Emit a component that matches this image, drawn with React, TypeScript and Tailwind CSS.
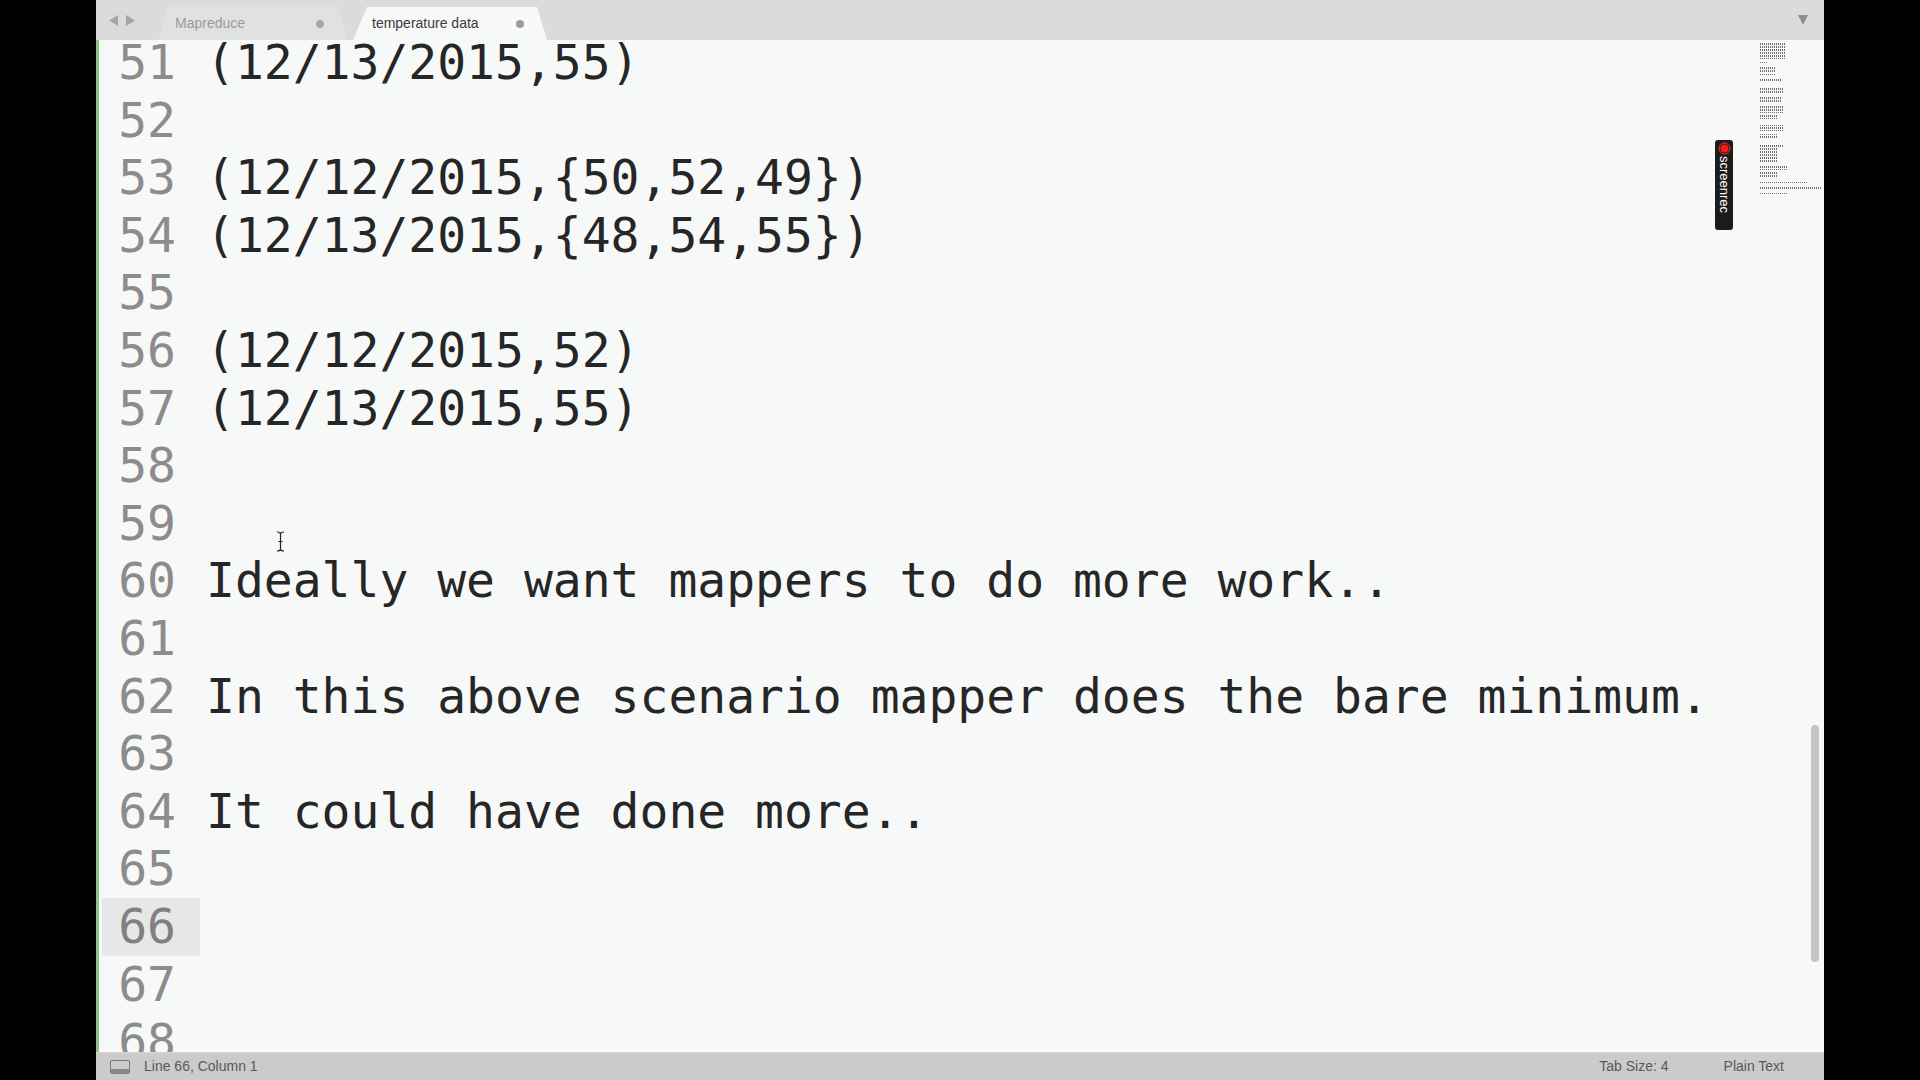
import React from 'react';

const lines: [number, string][] = [
  [51, '(12/13/2015,55)'],
  [52, ''],
  [53, '(12/12/2015,{50,52,49})'],
  [54, '(12/13/2015,{48,54,55})'],
  [55, ''],
  [56, '(12/12/2015,52)'],
  [57, '(12/13/2015,55)'],
  [58, ''],
  [59, ''],
  [60, 'Ideally we want mappers to do more work..'],
  [61, ''],
  [62, 'In this above scenario mapper does the bare minimum.'],
  [63, ''],
  [64, 'It could have done more..'],
  [65, ''],
  [66, ''],
  [67, ''],
  [68, ''],
];

// minimap blocks: x, y, w, h
const mini: [number, number, number, number][] = [
  [0, 0, 26, 16],
  [0, 19, 7, 2],
  [0, 24, 16, 5],
  [0, 31, 16, 2],
  [0, 36, 21, 2],
  [0, 44, 23, 6],
  [0, 54, 22, 5],
  [0, 62, 23, 8],
  [0, 72, 18, 4],
  [0, 82, 23, 6],
  [0, 91, 18, 5],
  [0, 101, 23, 3],
  [0, 105, 18, 15],
  [0, 122, 27, 5],
  [0, 129, 18, 5],
  [0, 139, 48, 2],
  [0, 144, 62, 2],
  [0, 149, 27, 2],
];

const Minimap = () => (
  <svg width="64" height="156" className="mt-[3px]">
    <defs>
      <pattern id="txt" width="2" height="3" patternUnits="userSpaceOnUse">
        <rect x="0" y="0" width="1" height="2" fill="#6f6f6f" />
      </pattern>
    </defs>
    {mini.map(([x, y, w, h], i) => (
      <rect key={i} x={x} y={y} width={w} height={h} fill="url(#txt)" />
    ))}
  </svg>
);

const TabBar = () => (
  <div className="flex items-end h-10 bg-[#dbdbdb] shrink-0">
    <div className="flex items-center gap-[8px] ml-[13px] self-center">
      <svg width="9" height="11"><polygon points="9,0 9,11 0,5.5" fill="#a5a5a5" /></svg>
      <svg width="9" height="11"><polygon points="0,0 0,11 9,5.5" fill="#a5a5a5" /></svg>
    </div>
    <div className="ml-[23px] w-[190px] h-[33px] bg-[#e1e1e1] [clip-path:polygon(0_100%,10px_0,calc(100%-10px)_0,100%_100%)] flex items-center pl-[17px] pr-[24px]">
      <span className="flex-1 text-[14px] text-[#9a9a9a]">Mapreduce</span>
      <span className="w-[8px] h-[8px] rounded-full bg-[#a8a8a8]" />
    </div>
    <div className="ml-[5px] w-[194px] h-[33px] bg-[#f7f8f8] [clip-path:polygon(0_100%,14px_0,calc(100%-10px)_0,100%_100%)] flex items-center pl-[19px] pr-[23px]">
      <span className="flex-1 text-[14px] text-[#3a3a3a]">temperature data</span>
      <span className="w-[8px] h-[8px] rounded-full bg-[#9c9c9c]" />
    </div>
    <div className="flex-1" />
    <div className="self-center mr-[16px]">
      <svg width="10" height="10"><polygon points="0,0 10,0 5,10" fill="#8d8d8d" /></svg>
    </div>
  </div>
);

const StatusBar = () => (
  <div className="h-[28px] bg-[#cbcbcb] border-t border-[#d6d6d6] flex items-center text-[14px] text-[#585858] shrink-0">
    <svg width="20" height="14" className="ml-[14px] shrink-0">
      <rect x="0.5" y="0.5" width="19" height="13" rx="1.5" fill="none" stroke="#7a7a7a" />
      <rect x="1" y="9" width="18" height="4.5" fill="#8a8a8a" />
    </svg>
    <span className="ml-[14px]">Line 66, Column 1</span>
    <div className="flex-1" />
    <span>Tab Size: 4</span>
    <span className="ml-[55px] mr-[40px]">Plain Text</span>
  </div>
);

export default function App() {
  return (
    <div
      className="flex h-screen w-full bg-black overflow-hidden"
      style={{ fontFamily: "'Liberation Sans', Arial, sans-serif" }}
    >
      <div className="w-[96px] shrink-0" />
      <div className="flex flex-col w-[1728px] shrink-0">
        <TabBar />
        <div className="flex flex-1 min-h-0">
          <div className="w-[3px] bg-[#8fc08a] shrink-0" />
          <div className="relative flex flex-1 bg-[#f7f8f8] overflow-hidden">
            <div
              className="flex-1 -mt-[6px] text-[48px] leading-[57.6px] text-[#262626] whitespace-pre"
              style={{ fontFamily: "'DejaVu Sans Mono', monospace" }}
            >
              {lines.map(([n, t]) => (
                <div key={n} className="flex h-[57.6px]">
                  <div
                    className={
                      'ml-[3px] w-[98px] pr-[24px] text-right shrink-0 ' +
                      (n === 66 ? 'bg-[#e6e8e8] text-[#808080]' : 'text-[#8c8c8c]')
                    }
                  >
                    {n}
                  </div>
                  <div className="pl-[6px]">{t}</div>
                </div>
              ))}
            </div>
            <div className="w-[64px] shrink-0">
              <Minimap />
            </div>

            {/* screenrec badge */}
            <div className="absolute top-[100px] right-[91px] w-[18px] h-[90px] rounded-[3px] bg-[#1c1c1c] flex flex-col items-center pt-[2px]">
              <svg width="13" height="13" className="shrink-0">
                <circle cx="6.5" cy="6.5" r="5.5" fill="none" stroke="#ff3b30" strokeWidth="1" />
                <circle cx="6.5" cy="6.5" r="4" fill="#ff1a10" />
              </svg>
              <span className="[writing-mode:vertical-rl] text-[13px] leading-[16px] text-white mt-[1px]">
                screenrec
              </span>
            </div>

            {/* scrollbar */}
            <div className="absolute right-[5px] top-[685px] w-[8px] h-[237px] rounded-full bg-[#c4c6c6]" />

            {/* mouse I-beam */}
            <svg width="9" height="21" className="absolute left-[177px] top-[491px]">
              <path d="M1 1 Q4.5 1 4.5 3 Q4.5 1 8 1 M4.5 3 V18 M1 20 Q4.5 20 4.5 18 Q4.5 20 8 20 M2.5 10.5 H6.5" fill="none" stroke="#222" strokeWidth="1.2" />
            </svg>
          </div>
        </div>
        <StatusBar />
      </div>
      <div className="flex-1" />
    </div>
  );
}
